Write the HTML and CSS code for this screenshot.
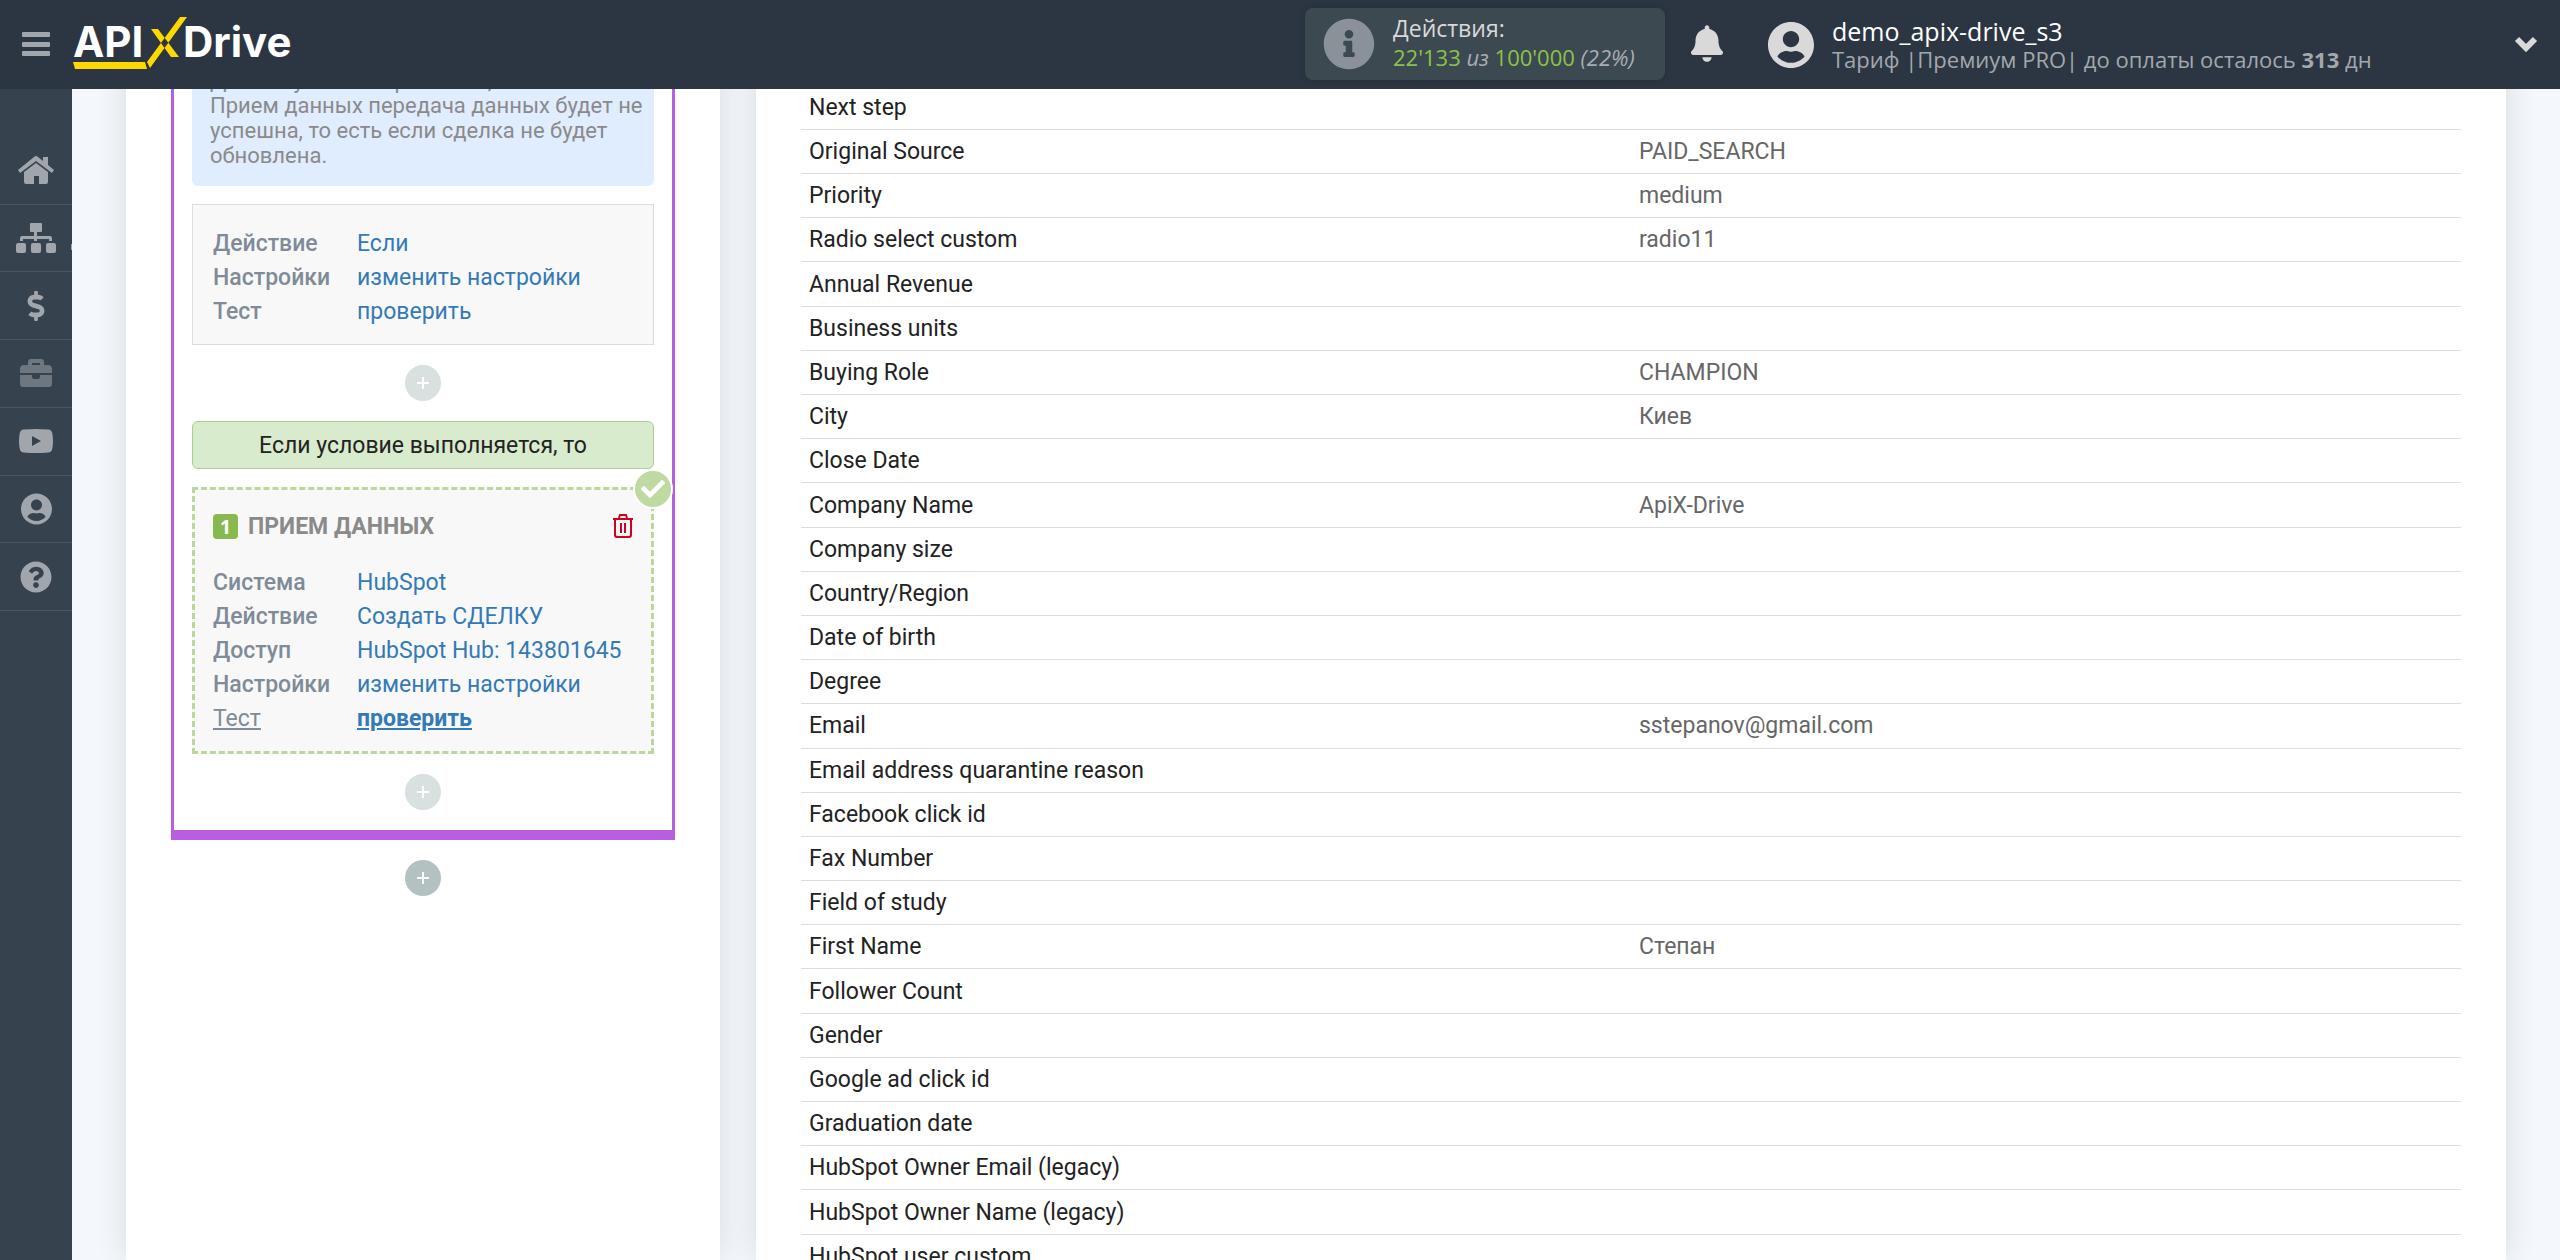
FILE: index.html
```html
<!DOCTYPE html>
<html lang="ru">
<head>
<meta charset="utf-8">
<meta name="viewport" content="width=device-width, initial-scale=1">
<title>ApiX-Drive</title>
<link rel="stylesheet" href="styles.css">
</head>
<body>
<header class="topbar">
  <button class="menu-btn" type="button" aria-label="Меню">
    <svg width="28" height="24" viewBox="0 0 28 24"><rect width="28" height="5" rx="1"/><rect y="10" width="28" height="5" rx="1"/><rect y="19" width="28" height="5" rx="1"/></svg>
  </button>
  <a class="logo" href="#" aria-label="ApiX-Drive">
    <svg width="224" height="56" viewBox="0 0 224 56">
      <text class="logo-text" x="0" y="41">API</text>
      <text class="logo-text" x="110" y="41">Drive</text>
      <path class="logo-mark" d="M0 46h72l2 7H2zM74 46l3 6L114 1h-7zM78 13h7l21 28h-8z"/>
    </svg>
  </a>
  <div class="usage">
    <svg width="52" height="52" viewBox="0 0 512 512"><path d="M256 8C119.043 8 8 119.083 8 256c0 136.997 111.043 248 248 248s248-111.003 248-248C504 119.083 392.957 8 256 8zm0 110c23.196 0 42 18.804 42 42s-18.804 42-42 42-42-18.804-42-42 18.804-42 42-42zm56 254c0 6.627-5.373 12-12 12h-88c-6.627 0-12-5.373-12-12v-24c0-6.627 5.373-12 12-12h12v-64h-12c-6.627 0-12-5.373-12-12v-24c0-6.627 5.373-12 12-12h64c6.627 0 12 5.373 12 12v100h12c6.627 0 12 5.373 12 12v24z"/></svg>
    <div class="usage-text">
      <div class="usage-title">Действия:</div>
      <div class="usage-count"><b>22'133</b> <i>из</i> <b>100'000</b> <i>(22%)</i></div>
    </div>
  </div>
  <button class="bell" type="button" aria-label="Уведомления">
    <svg width="32" height="37" viewBox="0 0 448 512"><path d="M224 512c35.32 0 63.97-28.65 63.97-64H160.03c0 35.35 28.65 64 63.97 64zm215.39-149.71c-19.32-20.76-55.47-51.99-55.47-154.29 0-77.7-54.48-139.9-127.94-155.16V32c0-17.67-14.32-32-31.98-32s-31.98 14.33-31.98 32v20.84C118.56 68.1 64.08 130.3 64.08 208c0 102.3-36.15 133.53-55.47 154.29-6 6.45-8.66 14.16-8.61 21.71.11 16.4 12.98 32 32.1 32h383.8c19.12 0 32-15.6 32.1-32 .05-7.55-2.61-15.27-8.61-21.71z"/></svg>
  </button>
  <div class="account">
    <svg width="46" height="48" viewBox="0 0 496 512"><path d="M248 8C111 8 0 119 0 256s111 248 248 248 248-111 248-248S385 8 248 8zm0 96c48.6 0 88 39.4 88 88s-39.4 88-88 88-88-39.4-88-88 39.4-88 88-88zm0 344c-58.7 0-111.3-26.6-146.5-68.2 18.8-35.4 55.6-59.8 98.5-59.8 2.4 0 4.8.4 7.1 1.1 13 4.2 26.6 6.9 40.9 6.9 14.3 0 28-2.7 40.9-6.9 2.3-.7 4.7-1.1 7.1-1.1 42.9 0 79.7 24.4 98.5 59.8C359.3 421.4 306.7 448 248 448z"/></svg>
    <div>
      <div class="account-name">demo_apix-drive_s3</div>
      <div class="account-plan">Тариф |Премиум PRO| до оплаты осталось <b>313</b> дн</div>
    </div>
  </div>
  <button class="expand" type="button" aria-label="Развернуть">
    <svg width="24" height="17" viewBox="0 0 24 17"><path d="M3 4l9 9 9-9"/></svg>
  </button>
</header>

<div class="app">
  <div class="sidebar">
    <nav class="sections" aria-label="Разделы">
      <a href="#" aria-label="Главная"><svg width="36" height="28" viewBox="0 0 36 28"><path d="M18 0q1 0 2 1l5 4V1h5v8l6 5-2 3-16-12L2 17l-2-3L16 1q1-1 2-1zM18 7l12 9v10q0 2-2 2h-7v-8h-5v8H8q-2 0-2-2V16z"/></svg></a>
      <a class="has-sub" href="#" aria-label="Связи"><svg width="40" height="30" viewBox="0 0 40 30"><path d="M15 0h10q1 0 1 1v7q0 1-1 1h-4v4h13q2 0 2 2v3h-3v-2H21v2h-3v-2H7v2H4v-3q0-2 2-2h12V9h-3q-1 0-1-1V1q0-1 1-1z"/><rect y="20" width="10" height="10" rx="2"/><rect x="15" y="20" width="10" height="10" rx="2"/><rect x="30" y="20" width="10" height="10" rx="2"/></svg></a>
      <a href="#" aria-label="Тарифы"><svg width="18" height="30" viewBox="0 0 288 512"><path d="M209.2 233.4l-108-31.6C88.7 198.2 80 186.5 80 173.5c0-16.3 13.2-29.5 29.5-29.5h66.3c12.2 0 24.2 3.7 34.2 10.5 6.1 4.1 14.3 3.1 19.5-2l34.8-34c7.1-6.9 6.1-18.4-1.8-24.5C238 74.8 207.4 64.1 176 64V16c0-8.8-7.2-16-16-16h-32c-8.8 0-16 7.2-16 16v48h-2.5C45.8 64-5.4 118.7.5 183.6c4.2 46.1 39.4 83.6 83.8 96.6l102.5 30c12.5 3.7 21.2 15.3 21.2 28.3 0 16.3-13.2 29.5-29.5 29.5h-66.3C100 368 88 364.3 78 357.5c-6.1-4.1-14.3-3.1-19.5 2l-34.8 34c-7.1 6.9-6.1 18.4 1.8 24.5 24.5 19.2 55.1 29.9 86.5 30v48c0 8.8 7.2 16 16 16h32c8.8 0 16-7.2 16-16v-48.2c46.6-.9 90.3-28.6 105.7-72.7 21.5-61.6-14.6-124.8-72.5-141.7z"/></svg></a>
      <a class="dim" href="#" aria-label="Инструменты"><svg width="32" height="28" viewBox="0 0 32 28"><path fill-rule="evenodd" d="M8 6V3q0-3 3-3h10q3 0 3 3v3h4q4 0 4 4v4H0v-4q0-4 4-4zm4 0h8V4h-8zM0 16h12v2q0 2 2 2h4q2 0 2-2v-2h12v9q0 3-3 3H3q-3 0-3-3z"/></svg></a>
      <a href="#" aria-label="Видео"><svg width="34" height="24" viewBox="0 0 34 24"><path fill-rule="evenodd" d="M5 .5Q17-.5 29 .5q4 0 4.500 5 1 6.500 0 13-.5 5-4.500 5-12 1-24 0-4 0-4.500-5-1-6.500 0-13Q1 .5 5 .5zM13 7v10l9-5z"/></svg></a>
      <a href="#" aria-label="Профиль"><svg width="31" height="32" viewBox="0 0 496 512"><path d="M248 8C111 8 0 119 0 256s111 248 248 248 248-111 248-248S385 8 248 8zm0 96c48.6 0 88 39.4 88 88s-39.4 88-88 88-88-39.4-88-88 39.4-88 88-88zm0 344c-58.7 0-111.3-26.6-146.5-68.2 18.8-35.4 55.6-59.8 98.5-59.8 2.4 0 4.8.4 7.1 1.1 13 4.2 26.6 6.9 40.9 6.9 14.3 0 28-2.7 40.9-6.9 2.3-.7 4.7-1.1 7.1-1.1 42.9 0 79.7 24.4 98.5 59.8C359.3 421.4 306.7 448 248 448z"/></svg></a>
      <a href="#" aria-label="Помощь"><svg width="32" height="32" viewBox="0 0 512 512"><path d="M504 256c0 136.997-111.043 248-248 248S8 392.997 8 256C8 119.083 119.043 8 256 8s248 111.083 248 248zM262.655 90c-54.497 0-89.255 22.957-116.549 63.758-3.536 5.286-2.353 12.415 2.715 16.258l34.699 26.31c5.205 3.947 12.621 3.008 16.665-2.122 17.864-22.658 30.113-35.797 57.303-35.797 20.429 0 45.698 13.148 45.698 32.958 0 14.976-12.363 22.667-32.534 33.976C247.128 238.528 216 254.941 216 296v4c0 6.627 5.373 12 12 12h56c6.627 0 12-5.373 12-12v-1.333c0-28.462 83.186-29.647 83.186-106.667 0-58.002-60.165-102-116.531-102zM256 338c-25.365 0-46 20.635-46 46 0 25.364 20.635 46 46 46s46-20.636 46-46c0-25.365-20.635-46-46-46z"/></svg></a>
    </nav>
  </div>

  <main class="content">
    <section class="card steps">
      <div class="branch">
        <p class="note">Данное условие сработает, если в<br>Прием данных передача данных будет не успешна, то есть если сделка не будет обновлена.</p>
        <div class="block">
          <dl class="props">
            <dt>Действие</dt><dd><a href="#">Если</a></dd>
            <dt>Настройки</dt><dd><a href="#">изменить настройки</a></dd>
            <dt>Тест</dt><dd><a href="#">проверить</a></dd>
          </dl>
        </div>
        <button class="add" type="button" aria-label="Добавить"><svg width="12" height="12" viewBox="0 0 12 12"><path d="M6 0v12M0 6h12"/></svg></button>
        <div class="condition">Если условие выполняется, то</div>
        <div class="block block-active">
          <span class="done"><svg width="24" height="24" viewBox="0 0 512 512"><path d="M173.898 439.404l-166.4-166.4c-9.997-9.997-9.997-26.206 0-36.204l36.203-36.204c9.997-9.998 26.207-9.998 36.204 0L192 312.69 432.095 72.596c9.997-9.997 26.207-9.997 36.204 0l36.203 36.204c9.997 9.997 9.997 26.206 0 36.204l-294.4 294.401c-9.998 9.997-26.207 9.997-36.204-.001z"/></svg></span>
          <div class="block-head">
            <span class="num">1</span>
            <h2>ПРИЕМ ДАННЫХ</h2>
            <button class="trash" type="button" aria-label="Удалить"><svg width="20" height="24" viewBox="0 0 20 24"><path d="M0 5h20M6 4l1-3h6l1 3M2 5v16q0 2 2 2h12q2 0 2-2V5M8 9v10M12 9v10"/></svg></button>
          </div>
          <dl class="props">
            <dt>Система</dt><dd><a href="#">HubSpot</a></dd>
            <dt>Действие</dt><dd><a href="#">Создать СДЕЛКУ</a></dd>
            <dt>Доступ</dt><dd><a href="#">HubSpot Hub: 143801645</a></dd>
            <dt>Настройки</dt><dd><a href="#">изменить настройки</a></dd>
            <dt class="current">Тест</dt><dd class="current"><a href="#">проверить</a></dd>
          </dl>
        </div>
        <button class="add" type="button" aria-label="Добавить"><svg width="12" height="12" viewBox="0 0 12 12"><path d="M6 0v12M0 6h12"/></svg></button>
      </div>
      <button class="add add-main" type="button" aria-label="Добавить"><svg width="12" height="12" viewBox="0 0 12 12"><path d="M6 0v12M0 6h12"/></svg></button>
    </section>

    <section class="card data">
      <table class="fields">
        <tbody>
          <tr><th scope="row">Next step</th><td></td></tr>
          <tr><th scope="row">Original Source</th><td>PAID_SEARCH</td></tr>
          <tr><th scope="row">Priority</th><td>medium</td></tr>
          <tr><th scope="row">Radio select custom</th><td>radio11</td></tr>
          <tr><th scope="row">Annual Revenue</th><td></td></tr>
          <tr><th scope="row">Business units</th><td></td></tr>
          <tr><th scope="row">Buying Role</th><td>CHAMPION</td></tr>
          <tr><th scope="row">City</th><td>Киев</td></tr>
          <tr><th scope="row">Close Date</th><td></td></tr>
          <tr><th scope="row">Company Name</th><td>ApiX-Drive</td></tr>
          <tr><th scope="row">Company size</th><td></td></tr>
          <tr><th scope="row">Country/Region</th><td></td></tr>
          <tr><th scope="row">Date of birth</th><td></td></tr>
          <tr><th scope="row">Degree</th><td></td></tr>
          <tr><th scope="row">Email</th><td>sstepanov@gmail.com</td></tr>
          <tr><th scope="row">Email address quarantine reason</th><td></td></tr>
          <tr><th scope="row">Facebook click id</th><td></td></tr>
          <tr><th scope="row">Fax Number</th><td></td></tr>
          <tr><th scope="row">Field of study</th><td></td></tr>
          <tr><th scope="row">First Name</th><td>Степан</td></tr>
          <tr><th scope="row">Follower Count</th><td></td></tr>
          <tr><th scope="row">Gender</th><td></td></tr>
          <tr><th scope="row">Google ad click id</th><td></td></tr>
          <tr><th scope="row">Graduation date</th><td></td></tr>
          <tr><th scope="row">HubSpot Owner Email (legacy)</th><td></td></tr>
          <tr><th scope="row">HubSpot Owner Name (legacy)</th><td></td></tr>
          <tr><th scope="row">HubSpot user custom</th><td></td></tr>
        </tbody>
      </table>
    </section>
  </main>
</div>
</body>
</html>
```
FILE: styles.css
```css
* { box-sizing: border-box; }

body {
  margin: 0;
  background: #f4f7fc;
  color: #222;
  font-family: Roboto, "Liberation Sans", sans-serif;
  font-size: 23px;
}

button {
  padding: 0;
  border: 0;
  background: none;
  font: inherit;
  cursor: pointer;
}

svg { display: block; }
a { color: #337ab7; text-decoration: none; }

/* Top bar */
.topbar {
  position: fixed;
  inset: 0 0 auto 0;
  z-index: 10;
  display: flex;
  align-items: center;
  height: 89px;
  padding: 0 22px 2px;
  background: #2b3642;
  color: #d9d9d9;
  fill: #d9d9d9;
  font-family: "Open Sans", "Noto Sans", sans-serif;
  font-size: 22px;
  line-height: 28px;
}

.menu-btn { margin-right: 23px; fill: #a0a6ab; }
.logo { margin-right: auto; }
.logo-text { fill: #fff; font: 700 42px Inter, sans-serif; }
.logo-mark { fill: #ffd800; }

.usage {
  display: flex;
  align-items: center;
  gap: 18px;
  width: 360px;
  height: 72px;
  margin-right: 26px;
  padding: 0 18px;
  border-radius: 8px;
  background: #3d4951;
  box-shadow: 0 0 6px rgba(0, 0, 0, .15);
  fill: #8a9198;
  white-space: nowrap;
}

.usage-text { padding-bottom: 4px; }
.usage-title { font-size: 23px; line-height: 30px; }
.usage-count { color: #a8adb1; }
.usage-count b { color: #8bc34a; font-weight: 400; }
.bell { margin-right: 45px; }

.account {
  display: flex;
  align-items: center;
  gap: 18px;
  width: 746px;
  padding-top: 2px;
  white-space: nowrap;
}

.account-name { color: #fff; font-size: 25px; }
.account-plan { color: #a3a8ad; }
.expand svg { fill: none; stroke: #d9d9d9; stroke-width: 6; }

/* Page frame */
.app {
  display: flex;
  height: 100vh;
  overflow: hidden;
}

.sidebar {
  flex: none;
  width: 72px;
  padding-top: 137px;
  background: #37424f;
  fill: #a0a6ab;
}

.sections {
  display: grid;
  grid-auto-rows: 1fr;
  height: 474px;
}

.sections a {
  position: relative;
  display: flex;
  align-items: center;
  justify-content: center;
  border-bottom: 1px solid #4a5663;
}

.sections .dim { fill: #6e7780; }

.sections .has-sub::after {
  content: "";
  position: absolute;
  right: 0;
  bottom: 21px;
  width: 1px;
  height: 6px;
  background: #a0a6ab;
}

.content {
  display: flex;
  flex: 1;
  gap: 36px;
  padding: 0 54px;
}

.card {
  background: #fff;
  box-shadow: 0 0 30px rgba(0, 0, 0, .12);
}

/* Step list */
.steps {
  display: flex;
  flex: none;
  flex-direction: column;
  align-items: center;
  gap: 20px;
  width: 594px;
  padding: 0 45px;
}

.branch {
  display: flex;
  flex-direction: column;
  gap: 18px;
  width: 504px;
  padding: 0 18px;
  border: solid #b85fe0;
  border-width: 0 3px 10px;
}

.branch::after { content: ""; }

.note {
  margin: 0;
  padding: 68px 8px 18px 18px;
  border-radius: 0 0 6px 6px;
  background: #e0edff;
  color: #8a8a8a;
  font-size: 22px;
  line-height: 25px;
}

.block {
  padding: 22px 20px 15px;
  border: 1px solid #dcdcdc;
  background: #f8f8f8;
}

.props {
  display: grid;
  grid-template-columns: 144px 1fr;
  margin: 0;
  line-height: 34px;
  white-space: nowrap;
}

.props dt { color: #7f8b98; font-weight: 500; }
.props dd { margin: 0; }
.props .current { text-decoration: underline; font-weight: 400; }
.props .current a { text-decoration: underline; font-weight: 700; }

.add {
  display: grid;
  place-items: center;
  align-self: center;
  width: 36px;
  height: 36px;
  margin: 2px 0;
  border-radius: 50%;
  background: #d9e0e0;
}

.add svg { stroke: #fff; stroke-width: 2; }
.add-main { margin: 0; background: #b3c1c1; }

.condition {
  padding-top: 2px;
  border: 1px solid #a9cf93;
  border-radius: 6px;
  background: #d8ebcc;
  line-height: 44px;
  text-align: center;
}

.block-active {
  position: relative;
  padding: 21px 18px 15px;
  border: 3px dashed #bbd89c;
}

.done {
  position: absolute;
  top: -21px;
  right: -22px;
  display: grid;
  place-items: center;
  width: 40px;
  height: 40px;
  border: 2px solid #fff;
  border-radius: 50%;
  background: #bedaa1;
  fill: #fff;
}

.block-head {
  display: flex;
  align-items: center;
  height: 30px;
  gap: 10px;
  margin-bottom: 25px;
}

.num {
  width: 25px;
  border-radius: 4px;
  background: #87b94f;
  color: #fff;
  font: 700 20px/25px "Open Sans", sans-serif;
  text-align: center;
}

.block-head h2 {
  flex: 1;
  margin: 0;
  color: #8a8a8a;
  font-size: 23px;
  font-weight: 700;
}

.trash svg { fill: none; stroke: #d0021b; stroke-width: 2; }

/* Field table */
.data {
  flex: 1;
  min-width: 0;
  padding: 86px 45px 0;
}

.fields {
  width: 100%;
  height: 1193px;
  border-collapse: collapse;
  table-layout: fixed;
}

.fields th,
.fields td {
  padding: 0 8px;
  border-bottom: 1px solid #ddd;
  font-weight: 400;
  text-align: left;
}

.fields td { color: #666; }
```
